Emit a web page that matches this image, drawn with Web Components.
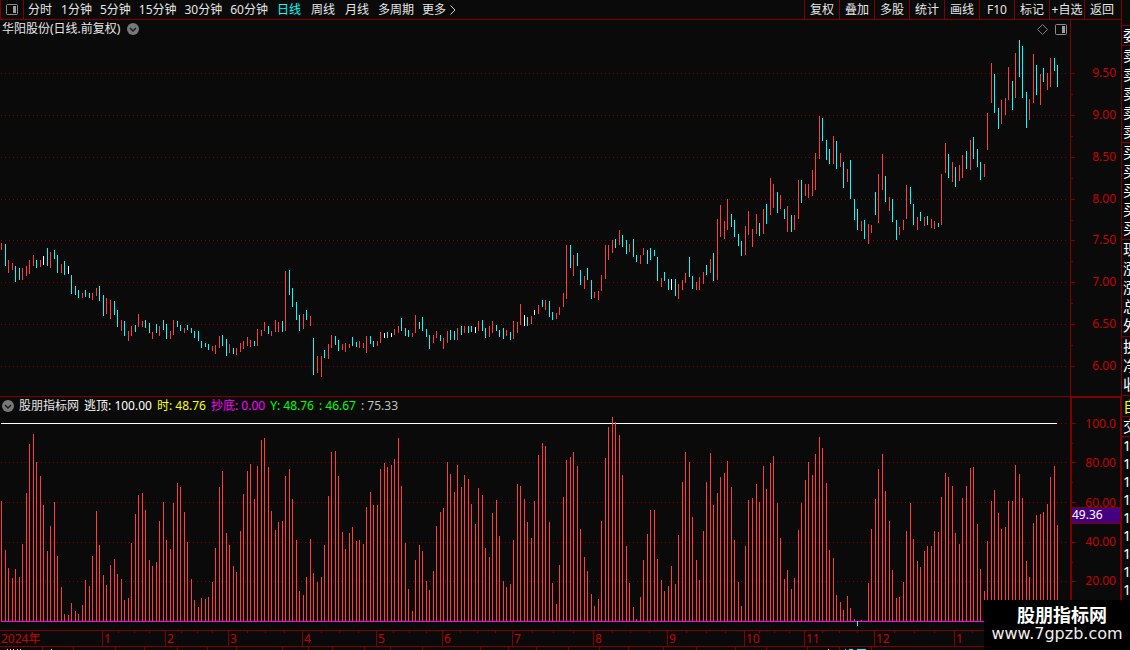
<!DOCTYPE html>
<html lang="zh-CN">
<head>
<meta charset="utf-8">
<title>华阳股份 日线</title>
<style>
	html,
	body {
		margin: 0;
		height: 100%;
		background: #0a0a0a;
		overflow: hidden;
	}
	body {
		--line: #800000;
		--label: #c80000;
		--up: #ff3c3c;
		--down: #00ffff;
		color: #e6e6e6;
		font: 12px/14px "Noto Sans", "Noto Sans CJK SC", sans-serif;
	}
</style>
</head>
<body>
<trading-screen>
	<tool-bar slot="top">
		<tool-button slot="periods" kind="icon" label="侧栏"><panel-icon></panel-icon></tool-button>
		<tool-button slot="periods">分时</tool-button>
		<tool-button slot="periods" kind="tight">1分钟</tool-button>
		<tool-button slot="periods" kind="tight">5分钟</tool-button>
		<tool-button slot="periods" kind="tight">15分钟</tool-button>
		<tool-button slot="periods" kind="tight">30分钟</tool-button>
		<tool-button slot="periods" kind="tight">60分钟</tool-button>
		<tool-button slot="periods" active>日线</tool-button>
		<tool-button slot="periods">周线</tool-button>
		<tool-button slot="periods">月线</tool-button>
		<tool-button slot="periods" kind="tight">多周期</tool-button>
		<tool-button slot="periods" kind="tight" more>更多</tool-button>
		<tool-button slot="tools" kind="cell">复权</tool-button>
		<tool-button slot="tools" kind="cell">叠加</tool-button>
		<tool-button slot="tools" kind="cell">多股</tool-button>
		<tool-button slot="tools" kind="cell">统计</tool-button>
		<tool-button slot="tools" kind="cell">画线</tool-button>
		<tool-button slot="tools" kind="cell">F10</tool-button>
		<tool-button slot="tools" kind="cell">标记</tool-button>
		<tool-button slot="tools" kind="cell">+自选</tool-button>
		<tool-button slot="tools" kind="cell">返回</tool-button>
	</tool-bar>

	<chart-pane slot="price" loose>
		<span slot="title">华阳股份(日线.前复权)</span>
		<round-toggle slot="title"></round-toggle>
		<diamond-icon slot="actions"></diamond-icon>
		<panel-icon slot="actions"></panel-icon>
		<price-plot slot="plot"></price-plot>
		<value-axis slot="axis" values="9.50 9.00 8.50 8.00 7.50 7.00 6.50 6.00" kind="price"></value-axis>
	</chart-pane>

	<chart-pane slot="indicator">
		<round-toggle slot="title"></round-toggle>
		<span slot="title">股朋指标网</span>
		<legend-item slot="title" color="#ffffff" name="逃顶">100.00</legend-item>
		<legend-item slot="title" color="#ffff00" name="时">48.76</legend-item>
		<legend-item slot="title" color="#ff00ff" name="抄底">0.00</legend-item>
		<legend-item slot="title" color="#00ff00" name="Y">48.76</legend-item>
		<legend-item slot="title" color="#00ff00">46.67</legend-item>
		<legend-item slot="title" color="#c0c0c0">75.33</legend-item>
		<indicator-plot slot="plot"></indicator-plot>
		<value-axis slot="axis" values="100.0 80.00 60.00 40.00 20.00" kind="indicator" mark="49.36"></value-axis>
	</chart-pane>

	<month-axis slot="months"></month-axis>
	<status-strip slot="status"></status-strip>
	<quote-strip slot="side"></quote-strip>
	<site-mark slot="mark"><span slot="name">股朋指标网</span>www.7gpzb.com</site-mark>
</trading-screen>

<script>
// One entry per trading day: colour (r up, c down, w flat), high and low row of the line.
const CANDLES = `
r243-250 c244-266 r260-273 r263-270 c266-282 c268-280 r268-280 r266-276 r260-274 r255-266
c260-268 r260-267 w256-265 c248-266 r252-268 c250-259 c255-273 r264-273 c261-275 w266-274
c275-294 c286-295 c290-298 r293-298 c290-297 c293-298 r293-300 r288-296 c286-301 c295-316
r298-314 r300-319 c301-315 c310-327 r320-331 c321-336 r331-341 r326-336 c325-332 r314-327
r321-327 c320-328 c323-333 r332-339 c324-333 r326-336 c320-330 c324-339 r331-339 r320-335
c321-327 c325-331 r328-333 c325-330 c328-333 c331-338 c331-341 c341-348 c343-347 c344-350
r346-351 r345-354 r336-348 c335-346 c339-356 r344-353 c348-354 r348-355 r343-352 r341-349
r337-346 r340-347 c341-346 r329-346 r330-336 r322-331 c326-334 r331-336 r320-332 r322-332
c321-332 r271-331 c270-295 c288-307 c302-320 c315-331 r314-329 c310-320 r316-326 c338-375
r356-373 r356-377 c350-358 r344-359 r335-348 c336-345 c340-351 r344-350 r343-352 r344-348
c337-346 c342-347 r341-348 r343-348 r336-353 c336-344 c341-347 r341-346 r332-343 w333-338
c332-338 w333-337 r329-335 r326-333 c318-331 c328-336 c330-337 r333-337 r315-333 c322-329
c317-331 c329-337 c335-349 r335-343 r331-338 c335-341 r338-349 r331-343 c330-340 c331-340
r328-340 c326-335 r326-333 c326-333 c326-332 w327-333 r321-331 c320-331 c328-338 r326-337
r321-333 c325-331 c330-337 c328-339 r330-336 c332-340 r321-339 r322-333 r304-325 w315-326
c317-326 r316-324 w310-315 r305-314 c300-307 r300-310 c301-317 c312-320 r313-319 r307-315
r293-307 r245-299 c245-268 r255-276 c253-266 c270-285 r276-289 c268-280 c280-299 r292-298
r291-300 r275-291 r245-279 r245-260 r240-253 c239-248 r230-245 c235-247 c240-254 r244-252
c239-257 c255-262 r255-264 r248-255 c250-264 c248-260 c250-256 c257-281 r278-287 c272-281
c279-290 w279-290 c279-296 r284-299 r280-290 r273-283 c257-277 c276-289 r282-290 r277-290
r272-284 c265-275 r259-273 c253-281 r219-280 r205-237 r221-239 r199-230 c214-227 c220-237
c234-246 c241-256 r226-255 r211-235 r229-247 r214-234 c223-236 r209-234 c204-224 r178-215
r184-208 c192-213 r195-209 c209-219 r206-232 c215-232 r215-230 r180-219 c180-203 r184-196
r184-198 r170-196 r153-190 r116-159 c118-141 c140-160 c149-164 r136-164 c141-169 r153-167
c162-188 r169-182 c160-199 c199-220 c209-230 r221-231 c220-239 r224-244 r225-233 c192-215
r174-223 r154-190 c176-202 r197-211 c199-222 c220-240 r227-235 r220-230 r185-219 c187-204
c204-225 r217-230 c212-221 r217-226 c216-225 r219-228 r221-229 c223-227 r174-225 r143-173
c154-178 r162-182 c167-187 r165-181 r155-178 c151-169 r140-170 c137-159 c149-167 c162-180
r164-177 r113-150 r63-103 c74-113 c108-129 r100-124 r98-115 r67-100 c81-110 r53-98
c40-77 c46-98 c92-128 r99-120 r54-103 c65-95 r74-105 c68-82 r73-90 r58-87
c58-71 c65-87`.trim().split(/\s+/);

// Top row of each indicator bar; the zero line is at 621.
const BARS = `
501 550 568 578 569 577 544 493 444 434 462 476 505 551 526 502 556 587 614 615
603 611 614 605 580 586 556 511 545 575 585 565 559 574 579 600 598 543 514 495
493 510 560 566 562 521 502 540 549 503 483 487 512 542 579 600 607 598 599 597
582 548 487 471 533 545 566 572 531 494 471 464 499 466 440 438 467 511 530 522
521 476 469 499 540 591 595 577 539 573 582 577 545 496 452 451 476 532 549 533
527 541 540 544 507 492 505 505 469 463 467 465 459 438 486 543 589 611 560 545
551 581 590 571 526 512 508 462 474 492 465 487 475 479 504 524 488 495 548 557
513 500 536 581 587 584 540 484 486 499 522 538 501 455 443 446 522 583 604 565
497 460 457 452 466 529 557 571 594 606 599 521 458 427 417 422 435 475 546 583
607 619 597 560 534 510 510 559 580 591 586 566 584 535 482 452 462 517 560 580
531 482 453 505 493 477 473 461 487 540 582 606 546 500 498 484 502 466 489 463
456 503 538 579 570 589 578 530 503 480 462 475 454 437 448 483 550 558 595 602
610 596 608 619 626 620 621 583 529 499 469 454 491 521 570 598 597 582 531 503
539 561 567 551 546 546 531 532 497 473 477 486 533 544 498 486 468 467 524 569
591 541 501 490 513 529 527 501 501 465 474 498 561 577 523 515 514 512 504 477
466 525`.trim().split(/\s+/).map(Number);

const ZERO = 621;
const PRICE_GRID = [73, 115, 157, 199, 240, 282, 324, 366];
const PRICE_MINOR = [94, 136, 178, 220, 261, 303, 345];
const INDICATOR_GRID = [423, 462, 502, 542, 581];
const INDICATOR_MINOR = [443, 482, 522, 562];

// Days are 3.5 columns apart; a half column is added at each of these days.
const LEAP_DAYS = [32, 91, 154, 215, 276];
const dayX = (i) => Math.ceil(1 + 3.5 * i + LEAP_DAYS.filter((d) => d <= i).length / 2);

const rect = (x, y, w, h, fill) => `<rect x="${x}" y="${y}" width="${w}" height="${h}" fill="${fill}"/>`;
const gridLine = (y) => `<path d="M1 ${y}.5H1067" stroke="var(--line)" stroke-dasharray="1 3"/>`;

function define(name, html, setup) {
	customElements.define(name, class extends HTMLElement {
		constructor() {
			super();
			this.attachShadow({ mode: 'open' });
			this.shadowRoot.innerHTML = html;
		}

		connectedCallback() {
			if (setup) setup(this, this.shadowRoot);
		}
	});
}

define('panel-icon', `
	<style>
		:host { display: block; width: 12px; height: 11px; }
		svg { display: block; }
	</style>
	<svg width="12" height="11" viewBox="0 0 12 11" aria-hidden="true">
		<rect x=".5" y=".5" width="11" height="10" rx="1" fill="none" stroke="#8c8c8c"/>
		<rect x="7" y="2" width="3" height="7" fill="#9c9c9c"/>
	</svg>
`);

define('diamond-icon', `
	<style>
		:host { display: block; width: 11px; height: 11px; }
		svg { display: block; }
	</style>
	<svg width="11" height="11" viewBox="0 0 11 11" aria-hidden="true">
		<path d="M5.5 .5l5 5-5 5-5-5z" fill="none" stroke="#808080"/>
	</svg>
`);

define('round-toggle', `
	<style>
		:host { display: block; }
		button { display: block; width: 12px; height: 12px; padding: 0; border: 0; background: none; }
		svg { display: block; }
	</style>
	<button aria-label="展开">
		<svg width="12" height="12" viewBox="0 0 12 12">
			<circle cx="6" cy="6" r="6" fill="#787878"/>
			<path d="M3 5l3 3 3-3" fill="none" stroke="#1c1c1c" stroke-width="1.5"/>
		</svg>
	</button>
`);

define('tool-button', `
	<style>
		:host { display: block; }
		button {
			display: flex;
			align-items: center;
			justify-content: center;
			height: 19px;
			box-sizing: border-box;
			padding: 0 5px;
			border: 0;
			background: none;
			color: inherit;
			font: inherit;
			white-space: nowrap;
		}
		svg { display: none; margin-left: 4px; }
		:host([kind="tight"]) button { padding: 0 4px; }
		:host([kind="icon"]) button {
			width: 24px;
			margin-right: -1px;
			border: solid var(--line);
			border-width: 0 1px;
		}
		:host([kind="cell"]) { flex: 0 0 35px; }
		:host([kind="cell"]) button { width: 100%; padding: 0; border-left: 1px solid var(--line); }
		:host([active]) { color: #00ffff; }
		:host([more]) svg { display: block; }
	</style>
	<button>
		<slot></slot>
		<svg width="6" height="10" viewBox="0 0 6 10" aria-hidden="true"><path d="M.5 .5L5 5 .5 9.500" fill="none" stroke="#d0d0d0"/></svg>
	</button>
`, (host, root) => {
	if (host.hasAttribute('label')) {
		root.querySelector('button').setAttribute('aria-label', host.getAttribute('label'));
	}
});

define('tool-bar', `
	<style>
		:host {
			display: flex;
			justify-content: space-between;
			height: 19px;
			border-bottom: 1px solid var(--line);
		}
		nav { display: flex; }
		.tools { padding-right: 2px; }
	</style>
	<nav aria-label="周期"><slot name="periods"></slot></nav>
	<nav class="tools" aria-label="工具"><slot name="tools"></slot></nav>
`);

define('legend-item', `
	<style>:host { display: block; white-space: nowrap; }</style>
	<span></span>: <slot></slot>
`, (host, root) => {
	host.style.color = host.getAttribute('color');
	root.querySelector('span').textContent = host.getAttribute('name') || '';
});

define('chart-pane', `
	<style>
		:host { display: flex; min-height: 0; }
		section { flex: 1; min-width: 0; display: flex; flex-direction: column; }
		header { display: flex; justify-content: space-between; height: 18px; padding: 0 3px 0 2px; }
		header div { display: flex; align-items: center; gap: 5px; }
		:host([loose]) header div { gap: 7px; }
	</style>
	<section>
		<header>
			<div><slot name="title"></slot></div>
			<div><slot name="actions"></slot></div>
		</header>
		<slot name="plot"></slot>
	</section>
	<slot name="axis"></slot>
`);

const plotStyle = `
	<style>
		:host { display: block; flex: 1; min-height: 0; }
		svg { display: block; width: 100%; height: 100%; }
	</style>
`;

define('price-plot', `
	${plotStyle}
	<svg viewBox="0 38 1070 358" preserveAspectRatio="none" shape-rendering="crispEdges" role="img" aria-label="日线"></svg>
`, (host, root) => {
	const colors = { r: 'var(--up)', c: 'var(--down)', w: '#fff' };
	const lines = CANDLES.map((candle, i) => {
		const [high, low] = candle.slice(1).split('-').map(Number);
		return rect(dayX(i), high, 1, low - high, colors[candle[0]]);
	});
	root.querySelector('svg').innerHTML = PRICE_GRID.map(gridLine).join('') + lines.join('');
});

define('indicator-plot', `
	${plotStyle}
	<svg viewBox="0 415 1070 215" preserveAspectRatio="none" shape-rendering="crispEdges" role="img" aria-label="指标"></svg>
`, (host, root) => {
	const bars = BARS.map((top, i) => (top > ZERO
		? rect(dayX(i), ZERO, 1, top - ZERO, 'var(--down)')
		: rect(dayX(i), top, 1, ZERO - top, 'var(--up)')));
	root.querySelector('svg').innerHTML = INDICATOR_GRID.map(gridLine).join('')
		+ rect(1, 423, 1056, 1, '#fff')
		+ rect(1, ZERO, 1056, 1, '#ff00ff')
		+ bars.join('');
});

define('value-axis', `
	<style>
		:host {
			display: flex;
			position: relative;
			flex: 0 0 51px;
			box-sizing: border-box;
			border-left: 1px solid var(--line);
			color: var(--label);
		}
		:host([kind="indicator"]) {
			border: solid var(--line);
			border-width: 1px 1px 0 2px;
		}
		svg { display: block; flex: none; width: 4px; height: 100%; }
		ol {
			flex: 1;
			display: flex;
			flex-direction: column;
			justify-content: space-between;
			margin: 0;
			padding: 46px 5px 23px 0;
			list-style: none;
			text-align: right;
		}
		:host([kind="indicator"]) ol { padding: 19px 4px 42px 0; }
		output {
			position: absolute;
			top: 109px;
			left: 0;
			right: 0;
			height: 15px;
			border: solid var(--line);
			border-width: 1px 0;
			background: #440080;
			color: #fff;
			line-height: 14px;
		}
		output:empty { display: none; }
	</style>
	<svg preserveAspectRatio="none" shape-rendering="crispEdges" aria-hidden="true"></svg>
	<ol></ol>
	<output></output>
`, (host, root) => {
	const price = host.getAttribute('kind') === 'price';
	const svg = root.querySelector('svg');
	svg.setAttribute('viewBox', price ? '0 20 4 376' : '0 398 4 232');
	svg.innerHTML = (price ? PRICE_GRID : INDICATOR_GRID).map((y) => rect(0, y, 4, 1, 'var(--line)')).join('')
		+ (price ? PRICE_MINOR : INDICATOR_MINOR).map((y) => rect(0, y, price ? 2 : 1, 1, 'var(--line)')).join('');
	root.querySelector('ol').innerHTML = host.getAttribute('values').split(' ').map((v) => `<li>${v}</li>`).join('');
	root.querySelector('output').textContent = host.getAttribute('mark') || '';
});

// Month label and the share of the width it takes.
const MONTHS = [
	['2024年', 102], ['1', 63], ['2', 63], ['3', 74], ['4', 74], ['5', 66], ['6', 70], ['7', 81],
	['8', 74], ['9', 77], ['10', 60], ['11', 70], ['12', 80], ['1', 167],
];
const WEEKS = [
	118, 134, 149, 181, 197, 212, 247, 265, 284, 321, 339, 358, 393, 409, 426, 460, 477, 495, 532, 553,
	573, 612, 630, 649, 686, 706, 725, 759, 774, 789, 822, 839, 857, 894, 914, 934, 972,
];

define('month-axis', `
	<style>
		:host { display: block; height: 15px; border-top: 1px solid var(--line); color: var(--label); }
		svg { display: block; width: 100%; height: 2px; }
		ol { display: grid; height: 15px; margin: -2px 0 0; padding: 0; list-style: none; }
		li {
			padding-left: 1px;
			border-left: 1px solid var(--line);
			line-height: 16px;
			white-space: nowrap;
		}
		li:first-child { border-left: 0; }
	</style>
	<svg viewBox="0 0 1121 2" preserveAspectRatio="none" shape-rendering="crispEdges" aria-hidden="true"></svg>
	<ol></ol>
`, (host, root) => {
	const list = root.querySelector('ol');
	root.querySelector('svg').innerHTML = WEEKS.map((x) => rect(x, 0, 1, 2, 'var(--line)')).join('');
	list.style.gridTemplateColumns = MONTHS.map(([, share]) => `minmax(0, ${share}fr)`).join(' ');
	list.innerHTML = MONTHS.map(([name]) => `<li>${name}</li>`).join('');
});

const TABS = [
	42, 73, 115, 144, 177, 207, 236, 282, 308, 332, 364, 390, 422, 480, 508, 536,
	568, 599, 628, 663, 696, 735, 766, 807, 839, 871,
];

define('status-strip', `
	<style>
		:host { display: block; height: 3px; border-top: 1px solid var(--line); }
		svg { display: block; width: 100%; height: 3px; }
	</style>
	<svg viewBox="0 0 1121 3" preserveAspectRatio="none" shape-rendering="crispEdges" aria-hidden="true"></svg>
`, (host, root) => {
	const specks = [[7, 1], [10, 1], [13, 1], [17, 1], [20, 1], [51, 1], [828, 1]];
	root.querySelector('svg').innerHTML = TABS.map((x) => rect(x, 0, 1, 3, 'var(--line)')).join('')
		+ specks.map(([x, w]) => rect(x, 2, w, 1, '#e6e6e6')).join('')
		+ [[845, 1], [849, 4], [857, 9]].map(([x, w]) => rect(x, 2, w, 1, 'var(--down)')).join('');
});

define('quote-strip', `
	<style>
		:host {
			display: block;
			flex: 0 0 8px;
			padding-top: 25px;
			border-left: 1px solid var(--line);
			overflow: hidden;
			color: #fff;
			font-size: 15px;
			line-height: 19px;
		}
		ul {
			margin: 0;
			padding: 0 0 0 1px;
			border-top: 1px solid var(--line);
			list-style: none;
		}
		li { white-space: nowrap; }
		.rows { padding-bottom: 1px; }
		.tab { color: #ffff00; line-height: 20px; }
		.ticks { font-size: 14px; line-height: 18px; }
	</style>
	<ul><li>委</li></ul>
	<ul class="rows"><li>卖</li><li>卖</li><li>卖</li><li>卖</li><li>卖</li></ul>
	<ul class="rows"><li>买</li><li>买</li><li>买</li><li>买</li><li>买</li></ul>
	<ul class="rows"><li>现</li><li>涨</li><li>涨</li><li>总</li><li>外</li></ul>
	<ul class="rows"><li>换</li><li>净</li><li>收</li></ul>
	<ul class="tab"><li>自</li></ul>
	<ul><li>交</li></ul>
	<ul class="ticks"><li>1</li><li>1</li><li>1</li><li>1</li><li>1</li><li>1</li><li>1</li><li>1</li><li>1</li></ul>
`);

define('site-mark', `
	<style>
		:host {
			display: block;
			box-sizing: border-box;
			width: 146px;
			height: 50px;
			padding-top: 4px;
			background: #000;
			color: #f4eeee;
			text-align: center;
			font: 16px/20px "DejaVu Sans", sans-serif;
		}
		strong {
			display: block;
			padding-left: 10px;
			color: #fff;
			font: bold 18px/20px "Noto Sans CJK SC", sans-serif;
		}
	</style>
	<strong><slot name="name"></slot></strong>
	<slot></slot>
`);

define('trading-screen', `
	<style>
		:host { display: flex; position: relative; height: 100vh; }
		main { flex: 1; min-width: 0; display: flex; flex-direction: column; }
		slot[name="price"]::slotted(*) { flex: 376 0 0; }
		slot[name="indicator"]::slotted(*) { flex: 233 0 0; border-top: 1px solid var(--line); }
		slot[name="mark"]::slotted(*) { position: absolute; right: 0; bottom: 0; }
	</style>
	<main>
		<slot name="top"></slot>
		<slot name="price"></slot>
		<slot name="indicator"></slot>
		<slot name="months"></slot>
		<slot name="status"></slot>
	</main>
	<slot name="side"></slot>
	<slot name="mark"></slot>
`);
</script>
</body>
</html>
